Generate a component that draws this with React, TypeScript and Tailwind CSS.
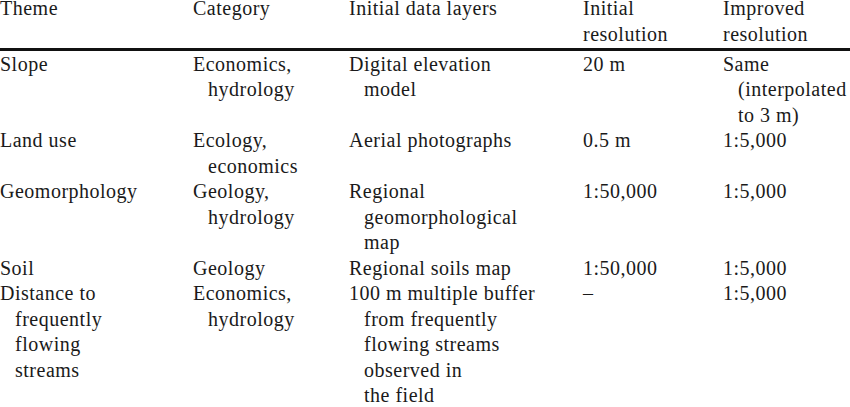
const rows: string[][][] = [
  [["Slope"], ["Economics,", "hydrology"], ["Digital elevation", "model"], ["20 m"], ["Same", "(interpolated", "to 3 m)"]],
  [["Land use"], ["Ecology,", "economics"], ["Aerial photographs"], ["0.5 m"], ["1:5,000"]],
  [["Geomorphology"], ["Geology,", "hydrology"], ["Regional", "geomorphological", "map"], ["1:50,000"], ["1:5,000"]],
  [["Soil"], ["Geology"], ["Regional soils map"], ["1:50,000"], ["1:5,000"]],
  [
    ["Distance to", "frequently", "flowing", "streams"],
    ["Economics,", "hydrology"],
    ["100 m multiple buffer", "from frequently", "flowing streams", "observed in", "the field"],
    ["\u2013"],
    ["1:5,000"],
  ],
];

const cols = "grid grid-cols-[193px_156px_234px_140px_1fr]";

function Cell({ lines }: { lines: string[] }) {
  return (
    <div className="whitespace-nowrap">
      {lines.map((l, i) => (
        <div key={i} className={i > 0 ? "pl-[15px]" : ""}>
          {l}
        </div>
      ))}
    </div>
  );
}

export default function App() {
  return (
    <div className="w-[850px] h-[407px] overflow-hidden bg-white">
      <div
        className="mt-[-4px] text-[20px] leading-[25.5px] tracking-[0.5px] text-[#1a1a1a]"
        style={{ fontFamily: '"Liberation Serif", "Times New Roman", serif' }}
      >
        {/* header */}
        <div className={cols}>
          <div>Theme</div>
          <div>Category</div>
          <div>Initial data layers</div>
          <div>
            <div>Initial</div>
            <div>resolution</div>
          </div>
          <div>
            <div>Improved</div>
            <div>resolution</div>
          </div>
        </div>
        <div className="mt-[1px] h-[2.5px] w-full bg-[#111]" />
        <div className="pt-[1px]">
          {rows.map((r, i) => (
            <div key={i} className={cols}>
              {r.map((c, j) => (
                <Cell key={j} lines={c} />
              ))}
            </div>
          ))}
        </div>
      </div>
    </div>
  );
}
